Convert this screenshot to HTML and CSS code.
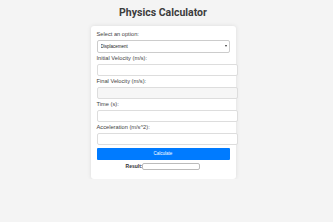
FILE: index.html
```html
<!DOCTYPE html>
<html lang="en">
<head>
    <meta charset="UTF-8">
    <meta name="viewport" content="width=device-width, initial-scale=1.0">
    <title>Physics Calculator</title>
    <link rel="stylesheet" href="styles.css">
</head>
<body>
    <h1 class="title">Physics Calculator</h1>

    <div class="calculator">
        <label for="option">Select an option:</label>
        <div class="select-wrap">
            <select id="option">
                <option>Displacement</option>
                <option>Final Velocity</option>
                <option>Time</option>
                <option>Acceleration</option>
            </select>
        </div>

        <label for="initial">Initial Velocity (m/s):</label>
        <input type="number" id="initial">

        <label for="final">Final Velocity (m/s):</label>
        <input type="number" id="final" class="off">

        <label for="time">Time (s):</label>
        <input type="number" id="time">

        <label for="accel">Acceleration (m/s^2):</label>
        <input type="number" id="accel">

        <button class="calc-btn">Calculate</button>

        <div class="result">
            <b>Result:</b><input type="text" id="result" readonly>
        </div>
    </div>
</body>
</html>
```

FILE: styles.css
```css
body {
    margin: 0;
    padding: 0 7px 0 0;
    font-family: Roboto, Arial, sans-serif;
    background-color: #f4f4f4;
    color: #333;
}

.title {
    margin: 0;
    padding-top: 6px;
    height: 20px;
    font-size: 10.5px;
    line-height: 14px;
    text-align: center;
    color: #3c3c3c;
}

.calculator {
    width: 133px;
    margin: 0 auto;
    padding: 5px 6px 9px 6px;
    background: white;
    border-radius: 3px;
    box-shadow: 0 0 4px rgba(0, 0, 0, 0.1);
    font-family: "Liberation Sans", Arial, sans-serif;
}

.calculator label {
    display: block;
    font-size: 5.7px;
    line-height: 7px;
    margin-bottom: 1.5px;
    color: #444;
}

.select-wrap {
    position: relative;
    margin-bottom: 2.5px;
}

.select-wrap::after {
    content: "";
    position: absolute;
    right: 3px;
    top: 5.5px;
    border-left: 1.5px solid transparent;
    border-right: 1.5px solid transparent;
    border-top: 2px solid #333;
}

.calculator select {
    display: block;
    width: 100%;
    height: 13px;
    padding: 0 3px;
    font-size: 4.5px;
    color: #222;
    border: 1px solid #ccc;
    border-radius: 2px;
    background: white;
    appearance: none;
}

.calculator input {
    display: block;
    width: 100%;
    height: 6px;
    padding: 2px 3px;
    margin-bottom: 2.5px;
    font-size: 5px;
    border: 1px solid #ddd;
    border-radius: 2px;
    background: white;
}

.calculator input.off {
    background: #f6f6f6;
}

.calc-btn {
    display: block;
    width: 100%;
    height: 12px;
    margin-top: 3px;
    padding: 0;
    font-size: 4.5px;
    color: white;
    background: #007bff;
    border: none;
    border-radius: 1px;
}

.result {
    margin-top: 3px;
    text-align: center;
    font-size: 5px;
    line-height: 7px;
}

.result input {
    display: inline-block;
    vertical-align: middle;
    width: 52px;
    height: 3px;
    padding: 1px 2px;
    margin: 0;
    border: 1px solid #bbb;
}
```
